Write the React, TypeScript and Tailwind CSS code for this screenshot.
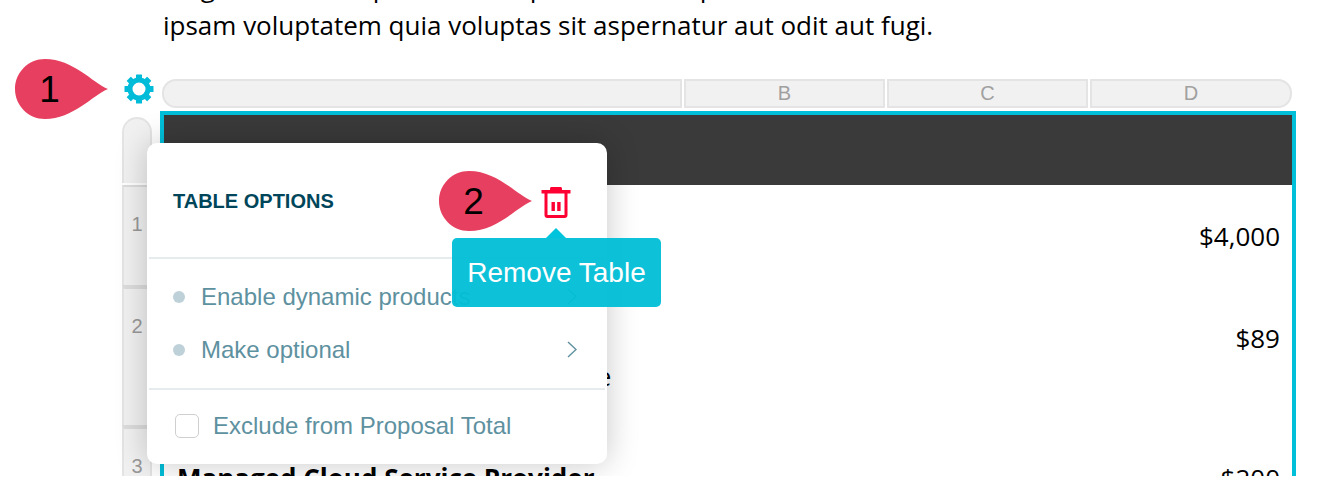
function Drop({ n, className }: { n: string; className: string }) {
  return (
    <div className={`absolute flex h-[60px] w-[93px] items-center justify-center pr-[24px] font-['Liberation_Sans',sans-serif] ${className}`}>
      <svg className="absolute inset-0" width="93" height="60" viewBox="0 0 93 60">
        <path
          d="M93 30C78 24 58 0 30 0C13.4 0 0 13.4 0 30C0 46.6 13.4 60 30 60C58 60 78 36 93 30Z"
          fill="#e73f5f"
        />
      </svg>
      <span className="relative text-[37px] leading-none text-black">{n}</span>
    </div>
  );
}

function Gear() {
  const teeth = [0, 45, 90, 135, 180, 225, 270, 315];
  return (
    <svg width="30" height="30" viewBox="0 0 30 30" className="shrink-0">
      {teeth.map((a) => (
        <rect key={a} x="12" y="0.5" width="6" height="7" rx="0.5" fill="#00bcd8" transform={`rotate(${a} 15 15)`} />
      ))}
      <circle cx="15" cy="15" r="9" fill="none" stroke="#00bcd8" strokeWidth="5" />
    </svg>
  );
}

function Trash() {
  return (
    <svg width="30" height="32" viewBox="0 0 30 32">
      <path d="M9 5V2.5C9 1.7 9.7 1 10.5 1H19.5C20.3 1 21 1.7 21 2.5V5" fill="#ff0033" />
      <rect x="0.5" y="4" width="29" height="3.5" fill="#ff0033" />
      <path d="M5 7V29C5 30 5.5 30.5 6.5 30.5H23.5C24.5 30.5 25 30 25 29V7" fill="none" stroke="#ff0033" strokeWidth="3" />
      <rect x="10.5" y="16" width="3.4" height="9" fill="#ff0033" />
      <rect x="16.2" y="16" width="3.4" height="9" fill="#ff0033" />
    </svg>
  );
}

function RowHead({ n, className }: { n: string; className: string }) {
  return (
    <div className={`border-x-2 border-x-[#e4e4e4] border-t-[#dcdcdc] bg-[#f1f1f1] text-center text-[20px] leading-[24px] text-[#999] ${className}`}>
      {n}
    </div>
  );
}

function Row({ title, desc, price, className }: { title: string; desc?: string; price: string; className: string }) {
  return (
    <div className={`flex justify-between pl-[13px] pr-[12px] pt-[34px] text-[26px] leading-[34px] text-black ${className}`}>
      <div>
        <div className="font-bold">{title}</div>
        {desc && <div className="mt-[4px]">{desc}</div>}
      </div>
      <div>{price}</div>
    </div>
  );
}

function OptionRow({ label }: { label: string }) {
  return (
    <div className="flex h-[53px] items-center pl-[24px] pr-[28px]">
      <span className="h-[12px] w-[12px] shrink-0 rounded-full bg-[#bfd1d8]" />
      <span className="ml-[16px] flex-1">{label}</span>
      <svg width="10" height="17" viewBox="0 0 10 17" fill="none" stroke="#5e919f" strokeWidth="1.4">
        <path d="M1 1L9 8.5L1 16" />
      </svg>
    </div>
  );
}

export default function App() {
  return (
    <div className="h-[492px] w-[1328px] overflow-hidden bg-white font-['Open_Sans',sans-serif]">
      <div className="relative h-[476px] overflow-hidden">
        <p className="mt-[-32px] h-[76px] pl-[163px] text-[26px] leading-[38px] text-black">
          Magna dolore sit pariatur est quo minim ut quia nostrum dolor sit amet enim, nemo
          <br />
          ipsam voluptatem quia voluptas sit aspernatur aut odit aut fugi.
        </p>

        {/* Column headers */}
        <div className="mt-[35px] flex pl-[124px]">
          <div className="-mt-[5px]">
            <Gear />
          </div>
          <div className="ml-[8px] flex h-[29px] w-[1130px] gap-[2px] font-['Liberation_Sans',sans-serif] text-[20px] leading-[25px] text-[#a0a0a0]">
            <div className="w-[520px] rounded-l-[14px] border-2 border-[#e4e4e4] bg-[#f1f1f1]" />
            <div className="w-[201px] border-2 border-[#e4e4e4] bg-[#f1f1f1] text-center">B</div>
            <div className="w-[201px] border-2 border-[#e4e4e4] bg-[#f1f1f1] text-center">C</div>
            <div className="w-[202px] rounded-r-[14px] border-2 border-[#e4e4e4] bg-[#f1f1f1] text-center">D</div>
          </div>
        </div>

        <div className="mt-[3px] flex pl-[122px]">
          {/* Row headers */}
          <div className="mt-[6px] w-[30px] font-['Liberation_Sans',sans-serif]">
            <div className="h-[66px] rounded-t-[15px] border-x-2 border-t-2 border-[#e4e4e4] bg-[#f1f1f1]" />
            <RowHead n="1" className="mt-[2px] h-[100px] border-t-2 pt-[25px]" />
            <RowHead n="2" className="h-[140px] border-t-4 pt-[25px]" />
            <RowHead n="3" className="h-[60px] border-t-4 pt-[25px]" />
          </div>

          {/* Table */}
          <div className="ml-[8px] w-[1136px] border-x-4 border-t-4 border-[#00bfd9]">
            <div className="h-[70px] bg-[#3a3a3a]" />
            <Row title="Web Hosting" price="$4,000" className="h-[102px]" />
            <Row title="Domain Name" desc="Some description of the service rule" price="$89" className="h-[140px]" />
            <Row title="Managed Cloud Service Provider" price="$200" className="h-[80px]" />
          </div>
        </div>

        {/* Table options popover */}
        <div className="absolute left-[147px] top-[143px] h-[321px] w-[460px] rounded-[10px] bg-white px-[2px] font-['Liberation_Sans',sans-serif] text-[24px] text-[#5e919f] shadow-[0_0_32px_rgba(0,0,0,0.22)]">
          <div className="flex h-[116px] items-center border-b-2 border-[#e6ebee] pt-[2px] pl-[24px]">
            <span className="text-[20px] font-bold text-[#00465a]">TABLE OPTIONS</span>
          </div>
          <div className="border-b-2 border-[#e6ebee] pt-[11px] pb-[12px]">
            <OptionRow label="Enable dynamic products" />
            <OptionRow label="Make optional" />
          </div>
          <div className="flex items-center pl-[26px] pt-[18px]">
            <span className="h-[24px] w-[24px] shrink-0 rounded-[5px] border border-[#cfcfcf] bg-white" />
            <span className="ml-[14px]">Exclude from Proposal Total</span>
          </div>
        </div>

        {/* Trash + tooltip */}
        <div className="absolute left-[541px] top-[186px]">
          <Trash />
        </div>
        <div className="absolute left-[452px] top-[238px] flex h-[69px] w-[209px] items-center justify-center rounded-[5px] bg-[#00bed6]/95 font-['Liberation_Sans',sans-serif] text-[28px] text-white">
          <span className="absolute left-[94px] top-[-10px] h-0 w-0 border-x-[10px] border-b-[10px] border-x-transparent border-b-[#00c4dc]" />
          <span className="relative">Remove Table</span>
        </div>

        <Drop n="1" className="left-[15px] top-[59px]" />
        <Drop n="2" className="left-[439px] top-[171px]" />
      </div>
    </div>
  );
}
